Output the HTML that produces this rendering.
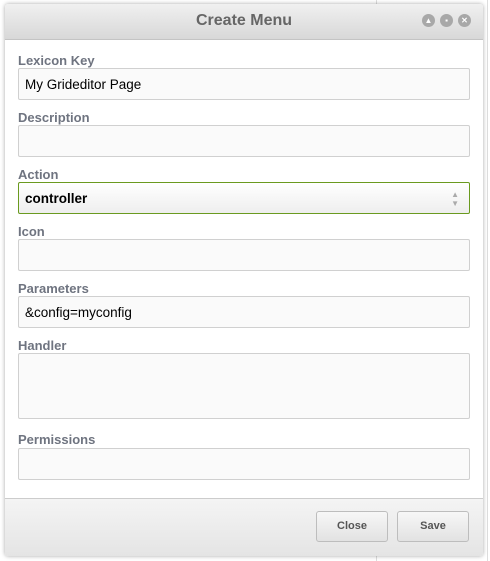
<!DOCTYPE html>
<html><head><style>
body{margin:0;width:490px;height:561px;background:#fff;position:relative;overflow:hidden;font-family:"Liberation Sans",sans-serif}
.bgline{position:absolute;background:#ddd}
.win{position:absolute;left:5px;top:4px;width:478px;height:552px;background:#fff;box-shadow:0 0 4px rgba(0,0,0,.35);border-radius:3px;overflow:hidden}
.hd{height:35px;background:linear-gradient(#f0f0f0,#d8d8d8);border-bottom:1px solid #c4c4c4;text-align:center;line-height:33px;font-size:16px;font-weight:bold;color:#666}
.tb{position:absolute;top:10px;width:13px;height:13px;border-radius:50%;background:#a8a8a8;color:#fff;font-size:8px;line-height:13px;text-align:center;font-weight:bold}
.lbl{position:absolute;left:13px;font-size:13px;font-weight:bold;color:#6f7480}
.in{position:absolute;left:13px;width:452px;height:32px;border:1px solid #d0d0d0;border-radius:2px;background:#fafafa;font-size:13.5px;color:#000;box-sizing:border-box;padding-left:6px;line-height:31px}
.ft{position:absolute;left:0;top:494px;width:478px;height:58px;background:linear-gradient(#f4f4f4,#e4e4e4);border-top:1px solid #ccc}
.btn{position:absolute;top:12px;width:72px;height:31px;border:1px solid #bdbdbd;border-radius:3px;background:linear-gradient(#f7f7f7,#e2e2e2);font-size:11px;font-weight:bold;color:#555;text-align:center;line-height:29px;box-sizing:border-box}
</style></head><body>
<div class="bgline" style="left:376px;top:0;width:1px;height:561px"></div>
<div class="bgline" style="left:487px;top:0;width:1px;height:561px"></div>
<div class="win">
<div class="hd">Create Menu</div>
<div class="tb" style="left:417px">▲</div><div class="tb" style="left:435px">▪</div><div class="tb" style="left:453px">✕</div>
<div class="lbl" style="top:49px">Lexicon Key</div>
<div class="in" style="top:64px">My Grideditor Page</div>
<div class="lbl" style="top:106px">Description</div>
<div class="in" style="top:121px"></div>
<div class="lbl" style="top:163px">Action</div>
<div class="in" style="top:178px;border-color:#6a9a1f;background:linear-gradient(#fff,#eee);font-weight:bold">controller<span style="position:absolute;right:10px;top:0;color:#aaa;font-size:8px;line-height:9px;padding-top:7px">▲<br>▼</span></div>
<div class="lbl" style="top:220px">Icon</div>
<div class="in" style="top:235px"></div>
<div class="lbl" style="top:277px">Parameters</div>
<div class="in" style="top:292px">&amp;config=myconfig</div>
<div class="lbl" style="top:334px">Handler</div>
<div class="in" style="top:349px;height:66px"></div>
<div class="lbl" style="top:428px">Permissions</div>
<div class="in" style="top:444px"></div>
<div class="ft"><div class="btn" style="left:311px">Close</div><div class="btn" style="left:392px">Save</div></div>
</div>
</body></html>
